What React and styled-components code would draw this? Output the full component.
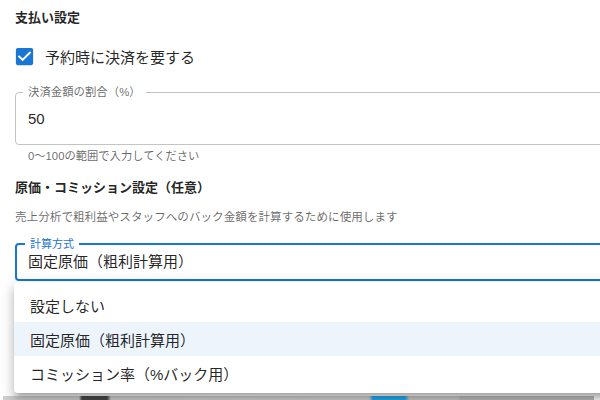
import React from "react";
import styled, { createGlobalStyle } from "styled-components";

const GlobalStyle = createGlobalStyle`
  html, body {
    margin: 0;
    padding: 0;
    background: #fff;
    overflow: hidden;
  }
  body {
    font-family: "Liberation Sans", "Noto Sans CJK JP", sans-serif;
    color: rgba(0, 0, 0, 0.87);
  }
`;

const Screen = styled.div`
  display: flex;
  flex-direction: column;
  height: 100vh;
  width: 100%;
  overflow: hidden;
`;

const Content = styled.div`
  display: flex;
  flex-direction: column;
  padding: 8px 0 0 15px;
`;

const Heading = styled.div`
  font-size: 13px;
  font-weight: 700;
  line-height: 20px;
  margin-top: ${(p) => p.$gap || 0}px;
`;

const CheckRow = styled.label`
  display: flex;
  align-items: center;
  gap: 9px;
  height: 24px;
  margin-top: 16px;
  font-size: 15px;
`;

const CheckIcon = styled.svg`
  width: 23px;
  height: 23px;
  margin-left: -2px;
  flex: none;
`;

const Field = styled.fieldset`
  margin: ${(p) => p.$gap}px 0 0 0;
  padding: 0 12px;
  width: 700px;
  box-sizing: border-box;
  border: ${(p) => (p.$focused ? "2px solid #1976d2" : "1px solid #c4c4c4")};
  border-radius: 4px;
  min-width: 0;
`;

const Legend = styled.legend`
  font-size: ${(p) => (p.$focused ? "11px" : "11.4px")};
  line-height: 12px;
  padding: 0 5px;
  margin-left: ${(p) => (p.$focused ? "-4px" : "-5px")};
  color: ${(p) => (p.$focused ? "#1976d2" : "rgba(0, 0, 0, 0.6)")};
`;

const Value = styled.div`
  font-size: 15px;
  line-height: 22px;
  padding: ${(p) => p.$pad};
  margin-left: ${(p) => (p.$focused ? "-1px" : "0")};
`;

const Helper = styled.div`
  font-size: 11.3px;
  line-height: 16px;
  color: rgba(0, 0, 0, 0.6);
  padding-left: 13px;
  margin-top: 3px;
`;

const Description = styled.div`
  font-size: 11.6px;
  line-height: 16px;
  color: rgba(0, 0, 0, 0.6);
  margin-top: 11px;
  white-space: nowrap;
`;

const SelectWrap = styled.div`
  position: relative;
`;

const Menu = styled.ul`
  position: absolute;
  top: calc(100% + 1px);
  left: -1px;
  width: 700px;
  margin: 0;
  padding: 6px 0 3px;
  list-style: none;
  background: #fff;
  border-radius: 4px;
  box-shadow: 0 5px 5px -3px rgba(0, 0, 0, 0.2), 0 8px 10px 1px rgba(0, 0, 0, 0.14),
    0 3px 14px 2px rgba(0, 0, 0, 0.12);
  z-index: 10;
`;

const MenuItem = styled.li`
  height: 34px;
  display: flex;
  align-items: center;
  padding-left: 16px;
  font-size: 15px;
  background: ${(p) => (p.$selected ? "rgba(25, 118, 210, 0.08)" : "transparent")};
`;

const Strip = styled.div`
  margin: auto 6px 0 3px;
  height: 4px;
  background: linear-gradient(
    to right,
    #cfcfcf 0px,
    #cfcfcf 76px,
    #4a4a4a 79px,
    #4a4a4a 104px,
    #cfcfcf 108px,
    #d2d2d2 366px,
    #27a9ec 370px,
    #27a9ec 402px,
    #c9c9c9 406px,
    #c9c9c9 455px,
    #bcbcbc 458px,
    #bcbcbc 100%
  );
`;

const options = ["設定しない", "固定原価（粗利計算用）", "コミッション率（%バック用）"];

export default function App() {
  return (
    <Screen>
      <GlobalStyle />
      <Content>
        <Heading>支払い設定</Heading>
        <CheckRow>
          <CheckIcon viewBox="0 0 24 24">
            <rect x="5" y="5" width="14" height="14" fill="#fff" />
            <path
              fill="#1976d2"
              d="M19 3H5c-1.11 0-2 .9-2 2v14c0 1.1.89 2 2 2h14c1.11 0 2-.9 2-2V5c0-1.1-.89-2-2-2zm-9 14l-5-5 1.41-1.41L10 14.17l7.59-7.59L19 8l-9 9z"
            />
          </CheckIcon>
          予約時に決済を要する
        </CheckRow>

        <Field $gap={18}>
          <Legend>決済金額の割合（%）</Legend>
          <Value $pad="10px 0 14px">50</Value>
        </Field>
        <Helper>0〜100の範囲で入力してください</Helper>

        <Heading $gap={14}>原価・コミッション設定（任意）</Heading>
        <Description>売上分析で粗利益やスタッフへのバック金額を計算するために使用します</Description>

        <SelectWrap>
          <Field $gap={13} $focused>
            <Legend $focused>計算方式</Legend>
            <Value $pad="1px 0 6px" $focused>
              固定原価（粗利計算用）
            </Value>
          </Field>
          <Menu>
            {options.map((o, i) => (
              <MenuItem key={o} $selected={i === 1}>
                {o}
              </MenuItem>
            ))}
          </Menu>
        </SelectWrap>
      </Content>
      <Strip />
    </Screen>
  );
}
